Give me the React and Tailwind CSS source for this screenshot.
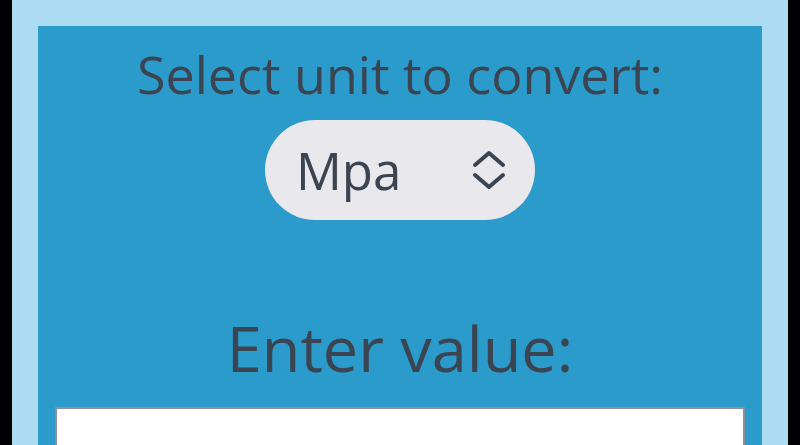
const App = () => {
    return (
        <div className="h-[445px] overflow-hidden bg-black px-3">
            <div className="h-full bg-[#acdcf2] px-[26px] pt-[26px]">
                <div className="h-full bg-[#2a9bcb] flex flex-col items-center px-[17px] font-['Open_Sans',sans-serif] text-[#3b4451]">

                    {/* Unit select */}
                    <h2 className="shrink-0 mt-[18px] text-[52px] leading-[60px]">Select unit to convert:</h2>
                    <div className="shrink-0 mt-[16px] w-[270px] h-[100px] rounded-full bg-[#e9e9ed] flex items-center justify-between pl-[31px] pr-[28px]">
                        <span className="text-[51px] leading-none">Mpa</span>
                        <svg width="36" height="40" viewBox="0 0 36 40" fill="none" stroke="#3b4451" strokeWidth="4" strokeLinecap="round" strokeLinejoin="round">
                            <path d="M4 15 L18 3 L32 15" />
                            <path d="M4 25 L18 37 L32 25" />
                        </svg>
                    </div>

                    {/* Value input */}
                    <h2 className="shrink-0 mt-[90px] text-[63px] leading-[76px]">Enter value:</h2>
                    <div className="shrink-0 mt-[21px] w-full h-[60px] bg-white border-2 border-[#8a8f9a]" />

                </div>
            </div>
        </div>
    )
}

export default App
